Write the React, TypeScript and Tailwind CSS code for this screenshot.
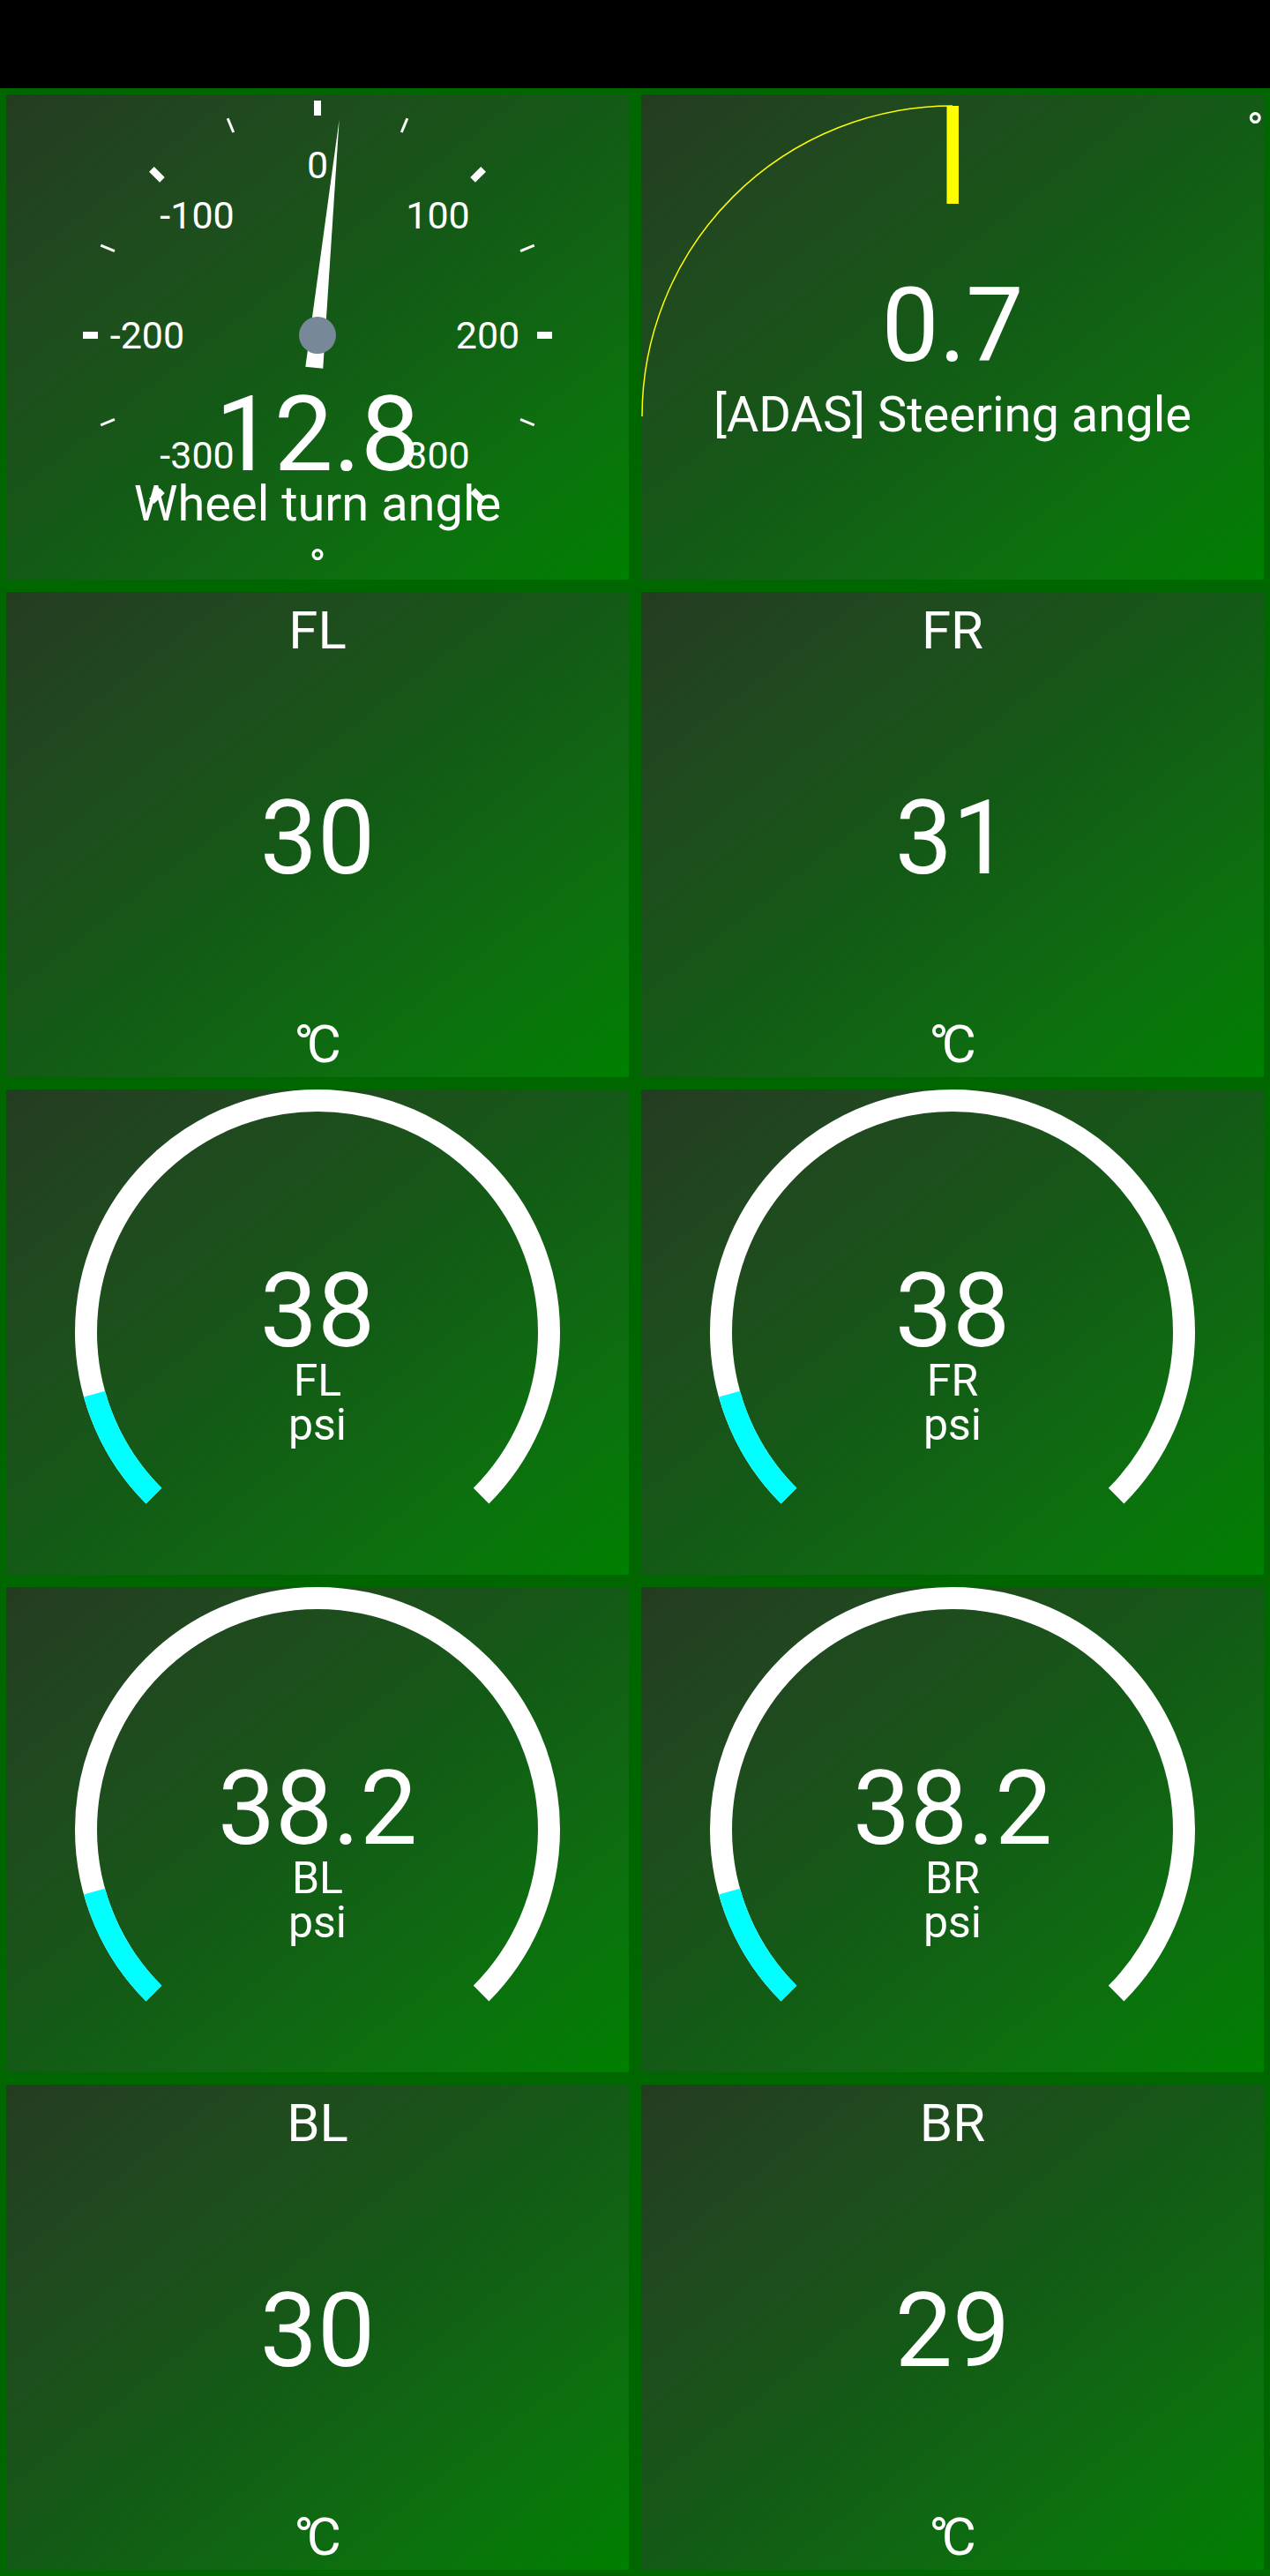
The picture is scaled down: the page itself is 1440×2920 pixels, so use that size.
const panel =
  "relative h-full w-full overflow-hidden bg-linear-to-br from-[#243c22] via-[#135a16] to-[#008000] text-white";

function Cell({ children }: { children: React.ReactNode }) {
  return <div className="h-[564px] overflow-hidden bg-[#006600] p-[7px]">{children}</div>;
}

function WheelDial() {
  const cx = 353;
  const cy = 273;
  const ticks = Array.from({ length: 13 }, (_, i) => -135 + i * 22.5);
  const labels = [
    { a: -135, t: "-300" },
    { a: -90, t: "-200" },
    { a: -45, t: "-100" },
    { a: 0, t: "0" },
    { a: 45, t: "100" },
    { a: 90, t: "200" },
    { a: 135, t: "300" },
  ];
  const rad = (d: number) => (d * Math.PI) / 180;
  const needle = (12.8 / 100) * 45;

  return (
    <svg className="absolute inset-0 h-full w-full" viewBox="0 0 706 550">
      {ticks.map((a, i) => {
        const s = Math.sin(rad(a));
        const c = Math.cos(rad(a));
        return (
          <line
            key={a}
            x1={cx + 266 * s}
            y1={cy - 266 * c}
            x2={cx + 249 * s}
            y2={cy - 249 * c}
            stroke="#fff"
            strokeWidth={i % 2 === 0 ? 8 : 3}
          />
        );
      })}
      {labels.map((l) => (
        <text
          key={l.t}
          x={cx + 193 * Math.sin(rad(l.a))}
          y={cy - 193 * Math.cos(rad(l.a)) + 15}
          fill="#fff"
          fontSize={43}
          fontFamily="Roboto, sans-serif"
          textAnchor="middle"
        >
          {l.t}
        </text>
      ))}
      <g transform={`translate(${cx} ${cy}) rotate(${needle})`}>
        <polygon points="0,-246 10,37 -10,37" fill="#fff" />
      </g>
      <circle cx={cx} cy={cy} r={21} fill="#778899" />
    </svg>
  );
}

function WheelCell() {
  return (
    <Cell>
      <div className={panel}>
        <WheelDial />
        <div className="relative flex flex-col items-center pt-[326px]">
          <div className="text-[119px] leading-none">12.8</div>
          <div className="-mt-[9px] text-[56px] leading-none">Wheel turn angle</div>
          <div className="mt-[29px] text-[52px] leading-[28px]">°</div>
        </div>
      </div>
    </Cell>
  );
}

function SteeringCell() {
  return (
    <Cell>
      <div className={panel}>
        <svg className="absolute inset-0 h-full w-full" viewBox="0 0 706 550">
          <path d="M 1 365 A 352 352 0 0 1 353 13" fill="none" stroke="#ffff00" strokeWidth={1.5} />
          <rect x={346.5} y={13} width={13.5} height={111} fill="#ffff00" />
        </svg>
        <span className="absolute right-0 top-[14px] text-[52px] leading-none">°</span>
        <div className="relative flex flex-col items-center pt-[204px]">
          <div className="text-[116px] leading-none">0.7</div>
          <div className="mt-[15px] text-[56px] leading-none">[ADAS] Steering angle</div>
        </div>
      </div>
    </Cell>
  );
}

function TempCell({ label, value }: { label: string; value: string }) {
  return (
    <Cell>
      <div className={`${panel} flex flex-col items-center`}>
        <div className="pt-[14px] text-[60px] leading-none">{label}</div>
        <div className="flex flex-1 items-center text-[116px] leading-none">{value}</div>
        <div className="pb-[7px] text-[60px] leading-none">
          <span className="-mr-[8px]">°</span>C
        </div>
      </div>
    </Cell>
  );
}

function arcPoint(r: number, deg: number) {
  const a = (deg * Math.PI) / 180;
  return `${353 + r * Math.cos(a)} ${275 + r * Math.sin(a)}`;
}

function PressureCell({ label, value }: { label: string; value: string }) {
  const r = 262.5;
  return (
    <Cell>
      <div className={panel}>
        <svg className="absolute inset-0 h-full w-full" viewBox="0 0 706 550">
          <path
            d={`M ${arcPoint(r, 135)} A ${r} ${r} 0 1 1 ${arcPoint(r, 45)}`}
            fill="none"
            stroke="#fff"
            strokeWidth={25}
          />
          <path
            d={`M ${arcPoint(r, 135)} A ${r} ${r} 0 0 1 ${arcPoint(r, 164.5)}`}
            fill="none"
            stroke="#00ffff"
            strokeWidth={25}
          />
        </svg>
        <div className="relative flex flex-col items-center pt-[193px]">
          <div className="text-[116px] leading-none">{value}</div>
          <div className="-mt-[4px] text-[50px] leading-none">{label}</div>
          <div className="text-[50px] leading-none">psi</div>
        </div>
      </div>
    </Cell>
  );
}

export default function App() {
  return (
    <div className="h-[2920px] w-[1440px] bg-black font-[Roboto,sans-serif]">
      <div className="h-[100px] bg-black" />
      <div className="grid h-[2820px] grid-cols-2 grid-rows-[repeat(5,564px)] bg-[#006600]">
        <WheelCell />
        <SteeringCell />
        <TempCell label="FL" value="30" />
        <TempCell label="FR" value="31" />
        <PressureCell label="FL" value="38" />
        <PressureCell label="FR" value="38" />
        <PressureCell label="BL" value="38.2" />
        <PressureCell label="BR" value="38.2" />
        <TempCell label="BL" value="30" />
        <TempCell label="BR" value="29" />
      </div>
    </div>
  );
}
